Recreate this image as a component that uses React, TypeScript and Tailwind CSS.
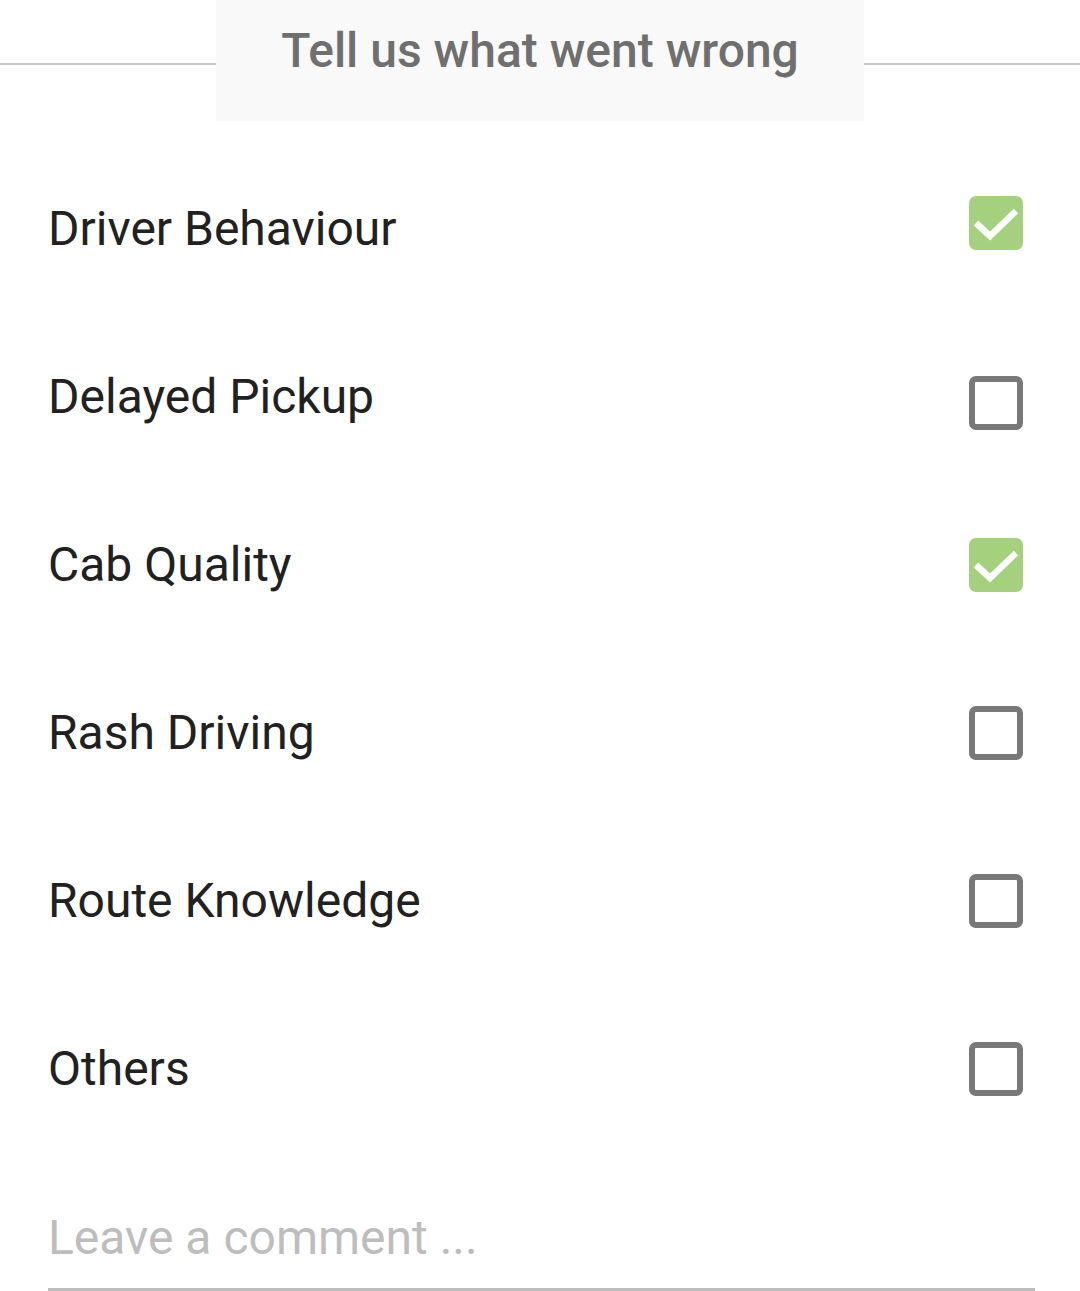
import { useState } from "react";

const reasons = [
  { label: "Driver Behaviour", checked: true, shift: "-translate-y-[6px]" },
  { label: "Delayed Pickup", checked: false, shift: "translate-y-[6px]" },
  { label: "Cab Quality", checked: true, shift: "" },
  { label: "Rash Driving", checked: false, shift: "" },
  { label: "Route Knowledge", checked: false, shift: "" },
  { label: "Others", checked: false, shift: "" },
];

function Checkbox({ checked }: { checked: boolean }) {
  if (checked) {
    return (
      <div className="w-[54px] h-[54px] rounded-[7px] bg-[#a5d17e]">
        <svg viewBox="0 0 54 54" className="w-full h-full">
          <path
            d="M7 27 L21 40 L47 15"
            fill="none"
            stroke="#ffffff"
            strokeWidth="6.5"
          />
        </svg>
      </div>
    );
  }
  return (
    <div className="w-[54px] h-[54px] rounded-[7px] border-[6px] border-[#787878] bg-white" />
  );
}

export default function App() {
  const [items, setItems] = useState(reasons);

  const toggle = (i: number) =>
    setItems((prev) =>
      prev.map((it, idx) => (idx === i ? { ...it, checked: !it.checked } : it))
    );

  return (
    <div
      className="w-[1080px] h-[1291px] bg-white overflow-hidden"
      style={{ fontFamily: "Roboto, 'Liberation Sans', sans-serif" }}
    >
      {/* Header */}
      <div className="flex items-start">
        <div className="flex-1 h-[2px] mt-[63px] bg-[#c8c8c8]" />
        <div className="w-[648px] h-[121px] bg-[#f9f9f9] flex justify-center pt-[27px]">
          <h1 className="text-[48px] leading-none font-medium text-[#6f6f6f]">
            Tell us what went wrong
          </h1>
        </div>
        <div className="flex-1 h-[2px] mt-[63px] bg-[#c8c8c8]" />
      </div>

      {/* Reasons */}
      <div className="mt-[24px] flex flex-col">
        {items.map((it, i) => (
          <div
            key={it.label}
            className="h-[168px] flex items-center justify-between pl-[48px] pr-[57px] cursor-pointer"
            onClick={() => toggle(i)}
          >
            <span className="text-[48px] leading-none text-[#212121]">
              {it.label}
            </span>
            <div className={it.shift}>
              <Checkbox checked={it.checked} />
            </div>
          </div>
        ))}
      </div>

      {/* Comment */}
      <div className="mt-[60px] ml-[48px] w-[987px] border-b-[3px] border-[#bdbdbd] pb-[27px]">
        <input
          className="w-full text-[48px] leading-none h-[48px] text-[#212121] placeholder:text-[#bdbdbd] outline-none bg-transparent"
          placeholder="Leave a comment ..."
        />
      </div>
    </div>
  );
}
